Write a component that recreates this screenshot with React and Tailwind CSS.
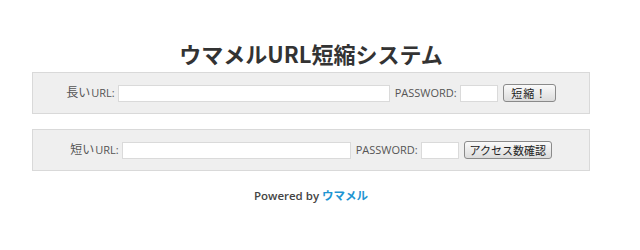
export default function App() {
  const font = { fontFamily: '"Open Sans", "Noto Sans CJK JP", sans-serif' };
  return (
    <div className="w-[640px] h-[250px] bg-white" style={font}>
      <div className="ml-[32px] w-[558px] pt-[36px]">
        <h1 className="text-center text-[22px] leading-[34px] font-bold text-[#333]" style={{ fontFamily: '"Noto Sans CJK JP", sans-serif' }}>
          ウマメルURL短縮システム
        </h1>
        <div className="mt-[2px] h-[42px] border border-[#d9d9d9] bg-[#efefef] flex items-center justify-center text-[11px] text-[#555]">
          <span className="mr-[3px]"><span className="text-[12px] mr-[1px]">長い</span>URL:</span>
          <input className="w-[272px] h-[17px] bg-white border border-[#dadada] outline-none" />
          <span className="ml-[5px] mr-[3px]">PASSWORD:</span>
          <input className="w-[38px] h-[17px] bg-white border border-[#dadada] outline-none" />
          <button className="ml-[5px] w-[53px] h-[18px] border border-[#8a8a8a] rounded-[3px] bg-gradient-to-b from-[#fafafa] to-[#dcdcdc] text-[11px] leading-none text-[#222] tracking-[1px]">
            短縮！
          </button>
        </div>
        <div className="mt-[15px] h-[42px] border border-[#d9d9d9] bg-[#efefef] flex items-center justify-center text-[11px] text-[#555]">
          <span className="mr-[3px]"><span className="text-[12px] mr-[1px]">短い</span>URL:</span>
          <input className="w-[229px] h-[17px] bg-white border border-[#dadada] outline-none" />
          <span className="ml-[5px] mr-[3px]">PASSWORD:</span>
          <input className="w-[38px] h-[17px] bg-white border border-[#dadada] outline-none" />
          <button className="ml-[5px] w-[88px] h-[18px] border border-[#8a8a8a] rounded-[3px] bg-gradient-to-b from-[#fafafa] to-[#dcdcdc] text-[11px] leading-none text-[#222]">
            アクセス数確認
          </button>
        </div>
        <div className="mt-[16px] text-center text-[11.5px] font-semibold text-[#444]">
          Powered by <span className="text-[#1e95d2]">ウマメル</span>
        </div>
      </div>
    </div>
  );
}
